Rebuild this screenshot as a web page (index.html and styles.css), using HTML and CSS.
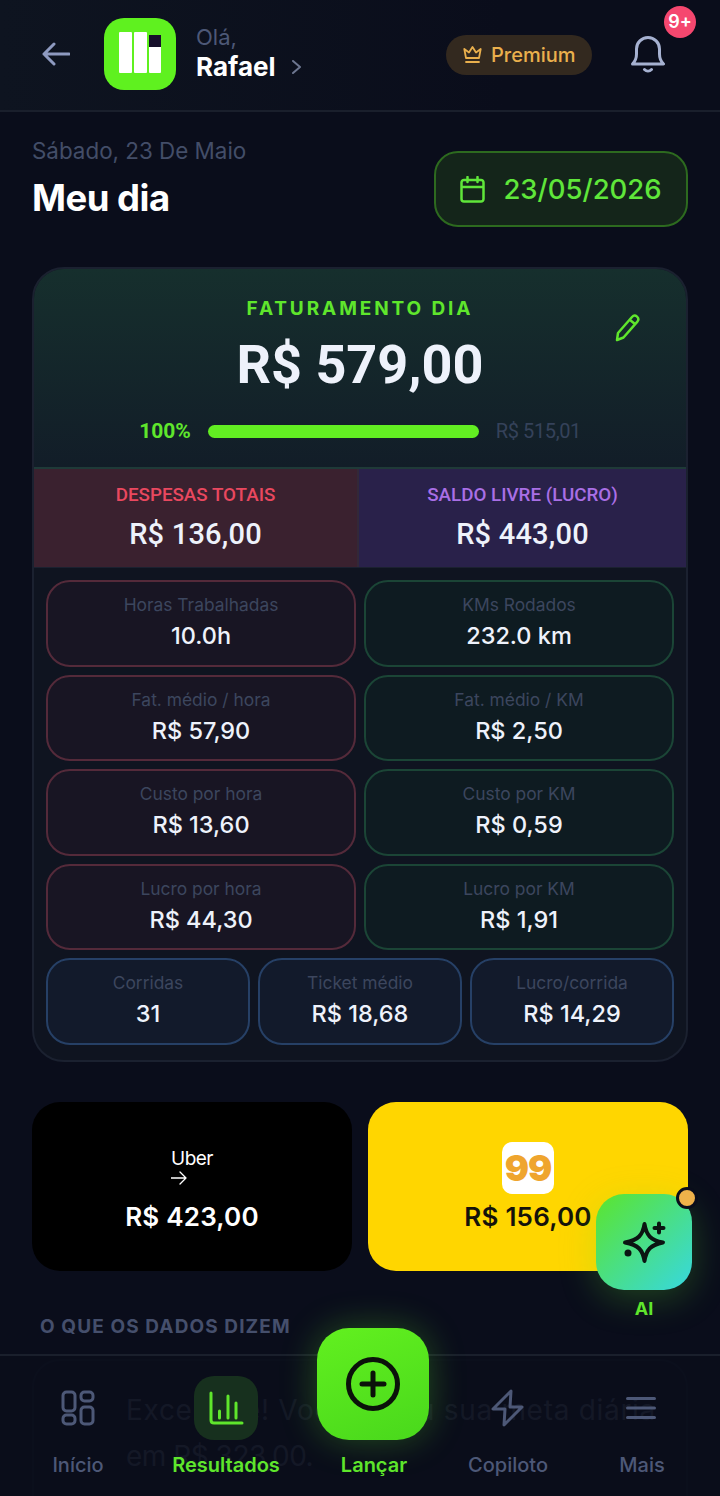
FILE: index.html
```html
<!DOCTYPE html>
<html lang="pt-BR">

<head>
    <meta charset="UTF-8">
    <title>Meu dia</title>
    <link rel="stylesheet" href="styles.css">
</head>

<body>
    <div class="app">
        <header class="topbar">
            <svg class="back" width="28" height="24" viewBox="0 0 28 24">
                <path d="M27 12H2M12 2 2 12l10 10" />
            </svg>
            <div class="logo">
                <span class="logo-bar"></span>
                <span class="logo-bar"></span>
                <span class="logo-bar logo-bar-short"></span>
                <span class="logo-dot"></span>
            </div>
            <div class="hello">
                <span class="hello-small">Olá,</span>
                <span class="hello-name">Rafael
                    <svg class="chev" width="9" height="14" viewBox="0 0 9 14">
                        <path d="m1 1 7 6-7 6" />
                    </svg>
                </span>
            </div>
            <div class="premium">
                <svg width="19" height="18" viewBox="0 0 19 18">
                    <path d="M3 12 1.300 3l4.700 3.500L9.500 1 13 6.500 17.700 3 16 12ZM3 16h13" />
                </svg>
                Premium
            </div>
            <div class="bell">
                <svg width="34" height="38" viewBox="0 0 34 38">
                    <path d="M1.500 28c3-3 4-5 4-10V13a11.500 11.500 0 0 1 23 0v5c0 5 1 7 4 10ZM13.500 33.500c2 2 5 2 7 0" />
                </svg>
                <span class="bell-count">9+</span>
            </div>
        </header>

        <main class="content">
            <section class="title-row">
                <div>
                    <p class="date-text">Sábado, 23 De Maio</p>
                    <h1 class="page-title">Meu dia</h1>
                </div>
                <div class="date-btn">
                    <svg width="25" height="27" viewBox="0 0 25 27">
                        <path d="M4 4h17a2.500 2.500 0 0 1 2.500 2.500V23a2.500 2.500 0 0 1-2.500 2.500H4A2.500 2.500 0 0 1 1.500 23V6.500A2.500 2.500 0 0 1 4 4ZM1.500 11h22M7.500 1v5M17.500 1v5" />
                    </svg>
                    23/05/2026
                </div>
            </section>

            <section class="day-card">
                <div class="hero">
                    <p class="hero-label">FATURAMENTO DIA</p>
                    <p class="hero-value">R$ 579,00</p>
                    <svg class="pencil" width="26" height="28" viewBox="0 0 26 28">
                        <path d="M2 26l1-7L17 3c1.500-1.700 3.500-1.700 5-.4s1.700 3.300.4 5L8.500 23.500ZM15 6l5 4" />
                    </svg>
                    <div class="goal">
                        <span class="goal-pct">100%</span>
                        <span class="goal-bar"></span>
                        <span class="goal-target">R$ 515,01</span>
                    </div>
                </div>

                <div class="split">
                    <div class="split-col split-red">
                        <p class="split-label">DESPESAS TOTAIS</p>
                        <p class="split-value">R$ 136,00</p>
                    </div>
                    <div class="split-col split-purple">
                        <p class="split-label">SALDO LIVRE (LUCRO)</p>
                        <p class="split-value">R$ 443,00</p>
                    </div>
                </div>

                <div class="stats">
                    <div class="stat stat-red"><p class="stat-label">Horas Trabalhadas</p><p class="stat-value">10.0h</p></div>
                    <div class="stat stat-green"><p class="stat-label">KMs Rodados</p><p class="stat-value">232.0 km</p></div>
                    <div class="stat stat-red"><p class="stat-label">Fat. médio / hora</p><p class="stat-value">R$ 57,90</p></div>
                    <div class="stat stat-green"><p class="stat-label">Fat. médio / KM</p><p class="stat-value">R$ 2,50</p></div>
                    <div class="stat stat-red"><p class="stat-label">Custo por hora</p><p class="stat-value">R$ 13,60</p></div>
                    <div class="stat stat-green"><p class="stat-label">Custo por KM</p><p class="stat-value">R$ 0,59</p></div>
                    <div class="stat stat-red"><p class="stat-label">Lucro por hora</p><p class="stat-value">R$ 44,30</p></div>
                    <div class="stat stat-green"><p class="stat-label">Lucro por KM</p><p class="stat-value">R$ 1,91</p></div>
                    <div class="stats-3">
                        <div class="stat stat-blue"><p class="stat-label">Corridas</p><p class="stat-value">31</p></div>
                        <div class="stat stat-blue"><p class="stat-label">Ticket médio</p><p class="stat-value">R$ 18,68</p></div>
                        <div class="stat stat-blue"><p class="stat-label">Lucro/corrida</p><p class="stat-value">R$ 14,29</p></div>
                    </div>
                </div>
            </section>

            <section class="platforms">
                <div class="platform platform-uber">
                    <div class="uber-logo">
                        <span>Uber</span>
                        <svg width="16" height="14" viewBox="0 0 16 14">
                            <path d="M0 7h15M9 1l6 6-6 6" />
                        </svg>
                    </div>
                    <p class="platform-value">R$ 423,00</p>
                </div>
                <div class="platform platform-99">
                    <div class="logo-99">99</div>
                    <p class="platform-value">R$ 156,00</p>
                </div>
            </section>

            <h2 class="section-title">O QUE OS DADOS DIZEM</h2>
            <div class="insight">
                <p>Excelente! Você bateu sua meta diária <span class="insight-value">em R$ 323,00.</span></p>
            </div>
        </main>

        <div class="ai-fab">
            <div class="ai-btn">
                <svg width="48" height="48" viewBox="0 0 48 48">
                    <path class="ai-star" d="M24.500 6c1.800 11 6 16.200 18.500 18.500-12.500 2.300-16.700 7.500-18.500 18.500-1.800-11-6-16.200-19.500-18.500C18.500 22.200 22.700 17 24.500 6Z" />
                    <path class="ai-mini" d="M39 5.500v9M34.500 10h9" />
                    <circle class="ai-dot" cx="8" cy="35" r="3.500" />
                </svg>
            </div>
            <span class="ai-badge"></span>
            <span class="ai-label">AI</span>
        </div>

        <nav class="bottom-nav">
            <div class="nav-item">
                <span class="nav-icon">
                    <svg width="36" height="36" viewBox="0 0 36 36">
                        <rect x="3" y="2" width="12" height="19" rx="3.500" />
                        <rect x="21" y="2" width="12" height="9" rx="3.500" />
                        <rect x="3" y="25" width="12" height="9" rx="3.500" />
                        <rect x="21" y="17" width="12" height="17" rx="3.500" />
                    </svg>
                </span>
                <span class="nav-text">Início</span>
            </div>
            <div class="nav-item nav-active">
                <span class="nav-icon nav-icon-box">
                    <svg width="36" height="36" viewBox="0 0 36 36">
                        <path d="M3 3v27c0 2 1 3 3 3h28M11.500 21v7M20 6v22M28 13v15" />
                    </svg>
                </span>
                <span class="nav-text">Resultados</span>
            </div>
            <div class="nav-item nav-add">
                <span class="add-btn">
                    <svg width="54" height="54" viewBox="0 0 54 54">
                        <circle cx="27" cy="27" r="24.500" />
                        <path d="M27 16v22M16 27h22" />
                    </svg>
                </span>
                <span class="nav-text">Lançar</span>
            </div>
            <div class="nav-item">
                <span class="nav-icon">
                    <svg width="36" height="38" viewBox="0 0 36 38">
                        <path d="M21 2 3 20h12l-1 16 18-18H20Z" />
                    </svg>
                </span>
                <span class="nav-text">Copiloto</span>
            </div>
            <div class="nav-item">
                <span class="nav-icon">
                    <svg width="32" height="26" viewBox="0 0 32 26">
                        <path d="M1.500 3.500h27M1.500 13h27M1.500 22.500h27" />
                    </svg>
                </span>
                <span class="nav-text">Mais</span>
            </div>
        </nav>
    </div>
</body>

</html>
```

FILE: styles.css
```css
* {
    box-sizing: border-box;
}

html,
body {
    margin: 0;
    padding: 0;
    background-color: #0a0d1b;
}

p,
h1,
h2 {
    margin: 0;
}

svg {
    display: block;
    fill: none;
    stroke-linecap: round;
    stroke-linejoin: round;
}

.app {
    position: relative;
    width: 720px;
    height: 1496px;
    overflow: hidden;
    font-family: Inter, "Noto Sans", sans-serif;
    color: #fff;
    background-color: #0a0d1b;
}

/* topo */
.topbar {
    display: flex;
    align-items: center;
    height: 112px;
    padding: 0 0 2px 42px;
    border-bottom: 2px solid #1a1f2c;
    background: linear-gradient(90deg, #0e1420, #0a0d1b 70%);
}

.back {
    stroke: #8e9ac0;
    stroke-width: 3;
}

.logo {
    position: relative;
    display: flex;
    gap: 2px;
    align-items: flex-end;
    width: 72px;
    height: 72px;
    margin-left: 34px;
    padding: 17px 15px;
    border-radius: 20px;
    background-color: #5ff11f;
}

.logo-bar {
    width: 13px;
    height: 41px;
    border-radius: 1px;
    background-color: #fff;
}

.logo-bar-short {
    width: 12px;
    height: 28px;
}

.logo-dot {
    position: absolute;
    top: 17px;
    right: 15px;
    width: 12px;
    height: 12px;
    background-color: #16102a;
}

.hello {
    display: flex;
    flex-direction: column;
    margin: -4px 0 0 20px;
    line-height: 29px;
}

.hello-small {
    font-size: 22px;
    color: #4d5877;
}

.hello-name {
    display: flex;
    align-items: center;
    gap: 16px;
    font-size: 26px;
    font-weight: 700;
}

.chev {
    stroke: #6d7690;
    stroke-width: 2;
}

.premium {
    display: flex;
    align-items: center;
    gap: 9px;
    width: 146px;
    height: 40px;
    margin: 2px 0 0 auto;
    padding-left: 17px;
    border-radius: 20px;
    font-size: 20px;
    font-weight: 500;
    color: #eab04d;
    background-color: #33291f;
}

.premium svg {
    stroke: #eab04d;
    stroke-width: 1.800;
}

.bell {
    position: relative;
    width: 34px;
    margin: 2px 55px 0 39px;
}

.bell svg {
    stroke: #a6b1d1;
    stroke-width: 3;
}

.bell-count {
    position: absolute;
    top: -30px;
    left: 33px;
    width: 32px;
    height: 32px;
    border-radius: 50%;
    font-size: 18px;
    font-weight: 600;
    line-height: 32px;
    text-align: center;
    background-color: #f5476f;
}

/* conteudo */
.content {
    padding: 0 32px;
}

.title-row {
    display: flex;
    justify-content: space-between;
    align-items: flex-start;
    height: 155px;
    padding-top: 24px;
}

.date-text {
    font-size: 22.400px;
    line-height: 30px;
    color: #434d68;
}

.page-title {
    margin-top: 9px;
    font-size: 36.500px;
    font-weight: 700;
    line-height: 46px;
    letter-spacing: -0.500px;
}

.date-btn {
    display: flex;
    align-items: center;
    justify-content: center;
    gap: 18px;
    width: 254px;
    height: 76px;
    margin-top: 15px;
    border: 2px solid #2d6a1f;
    border-radius: 24px;
    font-size: 27.500px;
    font-weight: 500;
    color: #5fe63a;
    background-color: #14251a;
}

.date-btn svg {
    stroke: #5fe63a;
    stroke-width: 2.500;
}

.day-card {
    overflow: hidden;
    height: 795px;
    border: 2px solid #1b2130;
    border-radius: 32px;
    background-color: #0f1420;
}

.hero {
    position: relative;
    height: 200px;
    padding-top: 28px;
    text-align: center;
    border-bottom: 2px solid #1f3a38;
    background: linear-gradient(180deg, #162f2d, #121d28);
}

.hero-label {
    font-size: 19px;
    font-weight: 700;
    line-height: 24px;
    letter-spacing: 2.900px;
    color: #5fe62c;
}

.hero-value {
    margin-top: 12px;
    font-family: Roboto, sans-serif;
    font-size: 54px;
    font-weight: 700;
    line-height: 64px;
    color: #eef2fb;
}

.pencil {
    position: absolute;
    top: 45px;
    right: 45px;
    stroke: #5fe62c;
    stroke-width: 2.500;
}

.goal {
    display: flex;
    align-items: center;
    justify-content: center;
    gap: 17px;
    margin-top: 22px;
    font-family: Roboto, sans-serif;
    font-size: 20px;
}

.goal-pct {
    font-size: 21px;
    font-weight: 700;
    color: #5fe62c;
}

.goal-bar {
    width: 271px;
    height: 13px;
    border-radius: 7px;
    background-color: #62ee22;
}

.goal-target {
    letter-spacing: -0.400px;
    color: #35425a;
}

.split {
    display: grid;
    grid-template-columns: 325px 1fr;
    height: 99px;
    border-bottom: 1px solid #1b2130;
}

.split-col {
    padding-top: 15px;
    text-align: center;
}

.split-red {
    border-right: 2px solid #332838;
    background-color: #3a212f;
}

.split-purple {
    background-color: #29214a;
}

.split-label {
    font-family: Roboto, sans-serif;
    font-size: 18.800px;
    font-weight: 500;
    line-height: 22px;
}

.split-red .split-label {
    color: #e9485f;
}

.split-purple .split-label {
    color: #a96fe6;
}

.split-value {
    margin-top: 10px;
    font-family: Roboto, sans-serif;
    font-size: 29px;
    font-weight: 500;
    line-height: 36px;
    letter-spacing: 0.200px;
    color: #eef2fb;
}

.stats {
    display: grid;
    grid-template-columns: 1fr 1fr;
    grid-auto-rows: 86.500px;
    gap: 8px;
    padding: 12px 12px 0;
}

.stats-3 {
    grid-column: 1 / 3;
    display: grid;
    grid-template-columns: repeat(3, 1fr);
    gap: 8px;
}

.stat {
    padding-top: 12px;
    border: 2px solid;
    border-radius: 24px;
    text-align: center;
}

.stat-red {
    border-color: #542a3a;
    background-color: #181523;
}

.stat-green {
    border-color: #1b4536;
    background-color: #0e1b21;
}

.stat-blue {
    border-color: #264066;
    background-color: #121a2b;
}

.stat-label {
    font-size: 17.400px;
    line-height: 22px;
    color: #3c465e;
}

.stat-value {
    margin-top: 5px;
    font-size: 23.500px;
    font-weight: 500;
    line-height: 29px;
    color: #eef2fb;
}

.platforms {
    display: grid;
    grid-template-columns: 1fr 1fr;
    gap: 16px;
    margin-top: 40px;
}

.platform {
    display: flex;
    flex-direction: column;
    align-items: center;
    height: 169px;
    padding-top: 40px;
    border-radius: 28px;
}

.platform-uber {
    background-color: #000;
}

.platform-99 {
    background-color: #ffd600;
}

.uber-logo {
    width: 42px;
    height: 52px;
    margin-bottom: 7px;
    padding-top: 7px;
    font-size: 19px;
    line-height: 20px;
    letter-spacing: -0.500px;
}

.uber-logo svg {
    margin-top: 2px;
    stroke: #fff;
    stroke-width: 1.300;
}

.logo-99 {
    width: 52px;
    height: 52px;
    margin-bottom: 7px;
    border-radius: 10px;
    font-size: 36px;
    font-weight: 900;
    line-height: 52px;
    text-align: center;
    letter-spacing: -1px;
    color: #efa52e;
    background-color: #fff;
}

.platform-value {
    font-size: 26px;
    font-weight: 600;
    line-height: 32px;
    letter-spacing: 0.200px;
}

.platform-99 .platform-value {
    color: #14120a;
}

.section-title {
    margin: 44px 0 0 8px;
    font-size: 19px;
    font-weight: 700;
    line-height: 24px;
    letter-spacing: 1.100px;
    color: #454f6c;
}

/* fica atras da barra de baixo */
.insight {
    height: 200px;
    margin-top: 20px;
    padding: 26px 0 0 92px;
    border: 2px solid #1b2130;
    border-radius: 28px;
    font-size: 28px;
    line-height: 46px;
    letter-spacing: 0.700px;
    color: #6f7892;
}

.insight p {
    width: 540px;
}

.insight-value {
    letter-spacing: -0.500px;
}

/* botao AI */
.ai-fab {
    position: absolute;
    top: 1194px;
    left: 596px;
    z-index: 5;
    width: 96px;
    text-align: center;
}

.ai-btn {
    display: flex;
    align-items: center;
    justify-content: center;
    width: 96px;
    height: 96px;
    border-radius: 28px;
    background: linear-gradient(135deg, #5be52c, #37d8e0);
    box-shadow: 0 8px 36px rgba(95, 230, 44, 0.250);
}

.ai-star,
.ai-mini {
    stroke: #0b1512;
    stroke-width: 4;
}

.ai-dot {
    fill: #0b1512;
}

.ai-badge {
    position: absolute;
    top: -7px;
    right: -6px;
    width: 22px;
    height: 22px;
    border: 3px solid #0a0d1b;
    border-radius: 50%;
    background-color: #efb24a;
}

.ai-label {
    display: block;
    margin-top: 7px;
    font-size: 18px;
    font-weight: 700;
    line-height: 24px;
    color: #5fe62c;
}

/* barra de baixo */
.bottom-nav {
    position: absolute;
    left: 0;
    bottom: 0;
    z-index: 4;
    display: grid;
    grid-template-columns: 156px 140px 156px 112px 156px;
    width: 720px;
    height: 142px;
    border-top: 2px solid #1a1f2c;
    background-color: rgba(10, 13, 27, 0.900);
}

.nav-item {
    display: flex;
    flex-direction: column;
    align-items: center;
    justify-content: flex-end;
    height: 122px;
}

.nav-text {
    font-size: 20px;
    font-weight: 500;
    line-height: 26px;
    color: #4d5877;
}

.nav-icon {
    display: flex;
    align-items: center;
    justify-content: center;
    width: 64px;
    height: 64px;
    margin-bottom: 12px;
}

.nav-icon svg {
    stroke: #4d5877;
    stroke-width: 3;
}

.nav-icon-box {
    border-radius: 20px;
    background-color: #17301e;
}

.nav-active .nav-text {
    font-weight: 600;
    color: #5fe62c;
}

.nav-active .nav-icon svg {
    stroke: #5fe62c;
}

.nav-add .nav-text {
    font-weight: 600;
    color: #5fe62c;
}

.add-btn {
    position: absolute;
    top: -28px;
    left: 317px;
    display: flex;
    align-items: center;
    justify-content: center;
    width: 112px;
    height: 112px;
    border-radius: 32px;
    background: linear-gradient(160deg, #62f01f, #49d81c);
    box-shadow: 0 0 36px rgba(95, 230, 44, 0.300);
}

.add-btn svg {
    stroke: #0b120a;
    stroke-width: 5;
}
```
